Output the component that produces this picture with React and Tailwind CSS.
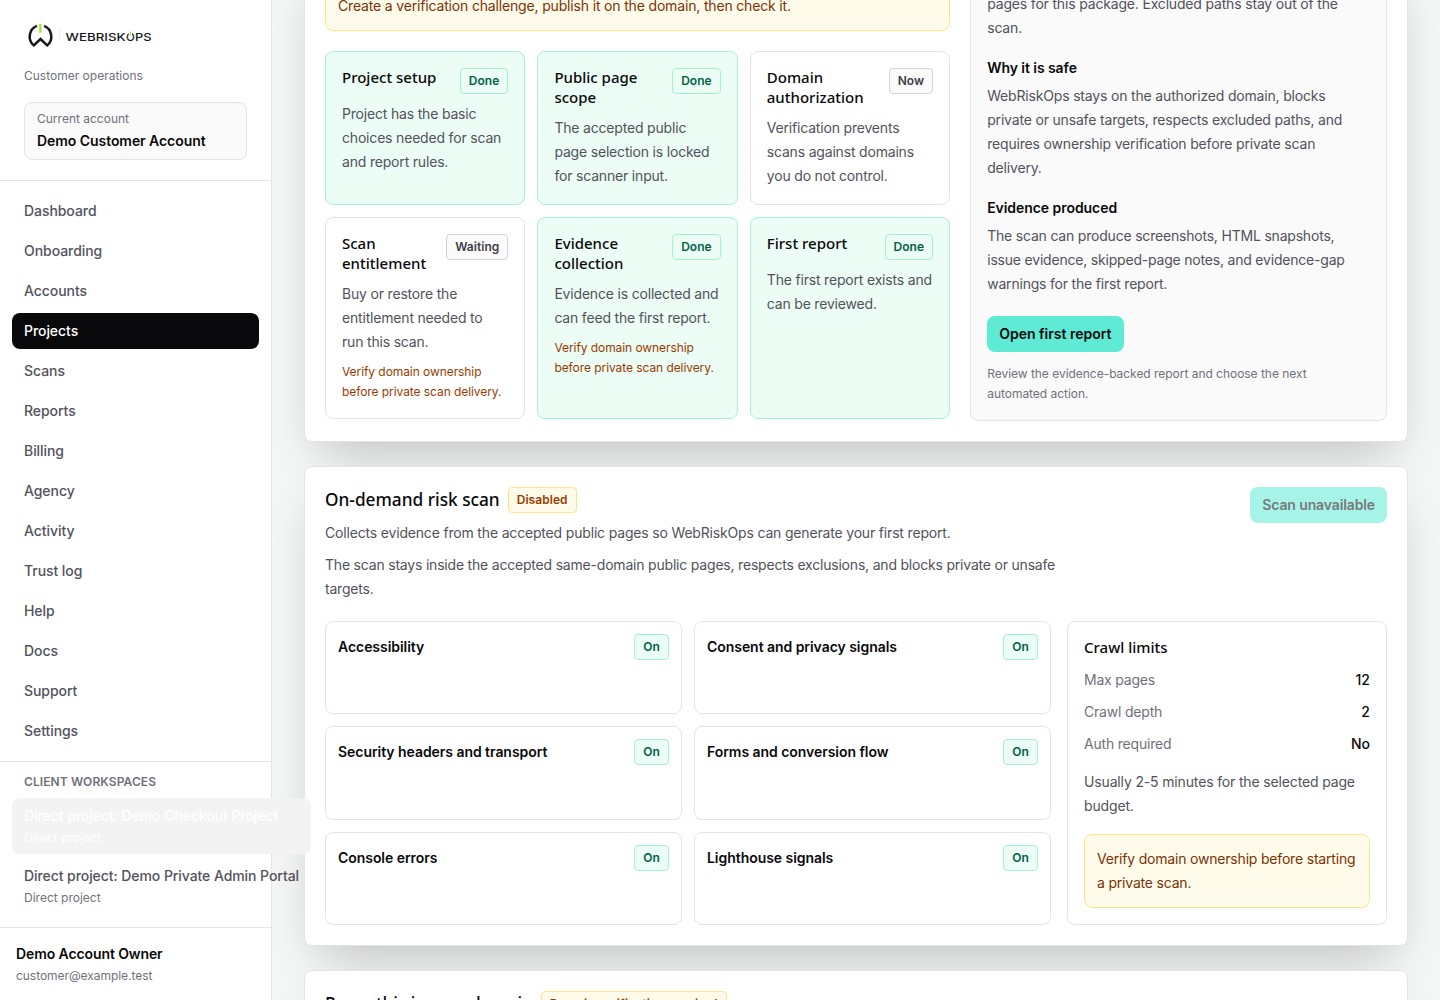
import React from "react";

const navItems = [
  "Dashboard",
  "Onboarding",
  "Accounts",
  "Projects",
  "Scans",
  "Reports",
  "Billing",
  "Agency",
  "Activity",
  "Trust log",
  "Help",
  "Docs",
  "Support",
  "Settings",
];

const setupSteps = [
  { title: "Project setup", status: "Done", text: "Project has the basic choices needed for scan and report rules." },
  { title: "Public page scope", status: "Done", text: "The accepted public page selection is locked for scanner input." },
  { title: "Domain authorization", status: "Now", text: "Verification prevents scans against domains you do not control." },
  {
    title: "Scan entitlement",
    status: "Waiting",
    // keep "run this scan." together on the last line
    text: "Buy or restore the entitlement needed to run\u00a0this\u00a0scan.",
    note: "Verify domain ownership before private scan delivery.",
  },
  {
    title: "Evidence collection",
    status: "Done",
    text: "Evidence is collected and can feed the first report.",
    note: "Verify domain ownership before private scan delivery.",
  },
  { title: "First report", status: "Done", text: "The first report exists and can be reviewed." },
];

const modules = [
  "Accessibility",
  "Consent and privacy signals",
  "Security headers and transport",
  "Forms and conversion flow",
  "Console errors",
  "Lighthouse signals",
];

const limits = [
  { label: "Max pages", value: "12" },
  { label: "Crawl depth", value: "2" },
  { label: "Auth required", value: "No" },
];

const badgeTones = {
  success: "border-emerald-200 bg-emerald-50 text-emerald-800",
  warning: "border-amber-200 bg-amber-50 text-amber-800",
  neutral: "border-zinc-300 bg-zinc-50 text-zinc-700",
};

const Badge = ({ tone = "neutral", className = "tracking-[0.05px]", children }) => (
  <span className={`shrink-0 whitespace-nowrap rounded border px-2 py-1 text-xs font-semibold ${className} ${badgeTones[tone]}`}>
    {children}
  </span>
);

const Panel = ({ className = "", children }) => (
  <section className={`rounded-lg border border-zinc-200 bg-white p-5 shadow-[0_24px_48px_-16px_rgba(0,0,0,0.24)] ${className}`}>
    {children}
  </section>
);

const Logo = () => (
  <svg width="130" height="28" viewBox="0 0 130 28" className="block" aria-label="WebRiskOps">
    {/* Mark: open ring that folds into a W, green power stem */}
    <path
      d="M12.9 3.8A11.6 11.6 0 0 0 9.8 23.4L16.5 17L23.2 23.4A11.6 11.6 0 0 0 20.1 3.8"
      fill="none"
      stroke="#18181b"
      strokeWidth="2.5"
    />
    <path d="M16.4 1.8v9" stroke="#a3e635" strokeWidth="2.4" />
    <path d="M35.5 8v9" stroke="#e4e4e7" strokeWidth="0.7" />
    <g fontFamily="Inter" fontWeight="500" fontSize="10.8" fill="#18181b">
      <text x="41.6" y="18.6" textLength="60" lengthAdjust="spacingAndGlyphs">WEBRISK</text>
      <text x="102" y="18.6" textLength="8.8" lengthAdjust="spacingAndGlyphs">O</text>
      <text x="110.9" y="18.6" textLength="16.6" lengthAdjust="spacingAndGlyphs">PS</text>
    </g>
    <path d="M104.8 9h3.2v4h-3.2z" fill="#fff" />
    <path d="M106.4 9.4v4.4" stroke="#a3e635" strokeWidth="1.1" />
  </svg>
);

const Sidebar = () => (
  <aside className="relative z-10 flex h-full w-[272px] shrink-0 flex-col border-r border-zinc-200 bg-white">
    <div className="h-[181px] shrink-0 border-b border-zinc-200 px-6 pt-[22px]">
      <Logo />
      <p className="mt-[18px] text-xs text-zinc-500">Customer operations</p>
      <div className="mt-[18px] rounded-lg border border-zinc-200 bg-zinc-50 px-3 py-2">
        <p className="text-xs text-zinc-500">Current account</p>
        <p className="mt-1 text-sm font-semibold tracking-[-0.06px] text-zinc-950">Demo Customer Account</p>
      </div>
    </div>

    <nav className="flex flex-col gap-1 p-3">
      {navItems.map((item) => (
        <a
          key={item}
          className={`rounded-lg px-3 py-2 text-sm font-medium tracking-[-0.06px] ${item === "Projects" ? "bg-zinc-950 text-white" : "text-zinc-600"}`}
        >
          {item}
        </a>
      ))}
    </nav>

    {/* Workspace rows keep their full label width and may run past the sidebar */}
    <div className="border-t border-zinc-200 px-3 pt-3">
      <p className="px-3 text-xs font-semibold uppercase tracking-[0.1px] text-zinc-500">Client workspaces</p>
      <div className="mt-2 grid w-max gap-1">
        <a className="whitespace-nowrap rounded-lg bg-[#f3f3f3] px-3 py-2 text-sm font-medium tracking-[-0.06px] text-white">
          Direct project: Demo Checkout Project
          <span className="mt-1 block text-xs font-normal tracking-normal text-white">Direct project</span>
        </a>
        <a className="whitespace-nowrap rounded-lg px-3 py-2 text-sm font-medium tracking-[-0.07px] text-zinc-600">
          Direct project: Demo Private Admin Portal
          <span className="mt-1 block text-xs font-normal tracking-normal text-zinc-500">Direct project</span>
        </a>
      </div>
    </div>

    <div className="mt-[13px] border-t border-zinc-200 p-4">
      <p className="text-sm font-semibold tracking-[-0.1px] text-zinc-950">Demo Account Owner</p>
      <p className="mt-1 text-xs tracking-[-0.04px] text-zinc-500">customer@example.test</p>
    </div>
  </aside>
);

const StepCard = ({ step }) => {
  const done = step.status === "Done";
  return (
    <div className={`rounded-lg border p-4 ${done ? "border-emerald-200 bg-emerald-50" : "border-zinc-200 bg-white"}`}>
      <div className="flex items-start justify-between gap-3">
        <h3 className="-mt-px pb-px font-['Noto_Sans'] text-[15px] font-medium leading-5 text-zinc-950">{step.title}</h3>
        <Badge tone={done ? "success" : "neutral"}>{step.status}</Badge>
      </div>
      <p className="mt-2 text-sm leading-6 tracking-[-0.185px] text-zinc-600">{step.text}</p>
      {step.note && <p className="mt-2 text-xs leading-5 tracking-[-0.07px] text-amber-800">{step.note}</p>}
    </div>
  );
};

const App = () => {
  return (
    <div className="flex h-[1000px] w-[1440px] overflow-hidden bg-[#f5f7f6] font-['Inter',sans-serif] text-zinc-950">
      <Sidebar />

      <main className="flex h-full min-w-0 flex-1 flex-col gap-6 px-8">
        {/* First report setup, scrolled partly out of view */}
        <Panel className="-mt-[46px] shrink-0">
          <div className="grid grid-cols-[minmax(0,1.5fr)_minmax(0,1fr)] gap-5">
            <div className="pt-1.5">
              <div className="rounded-lg border border-amber-200 bg-amber-50 p-3 text-sm leading-6 tracking-[-0.165px] text-amber-900">
                Create a verification challenge, publish it on the domain, then check it.
              </div>
              <div className="mt-5 grid grid-cols-3 gap-3">
                {setupSteps.map((step) => (
                  <StepCard key={step.title} step={step} />
                ))}
              </div>
            </div>

            <div className="rounded-lg border border-zinc-200 bg-zinc-50 p-4 text-sm leading-6 text-zinc-600">
              <p className="tracking-[-0.175px]">pages for this package. Excluded paths stay out of the scan.</p>
              <h4 className="mt-4 font-semibold tracking-[-0.06px] text-zinc-950">Why it is safe</h4>
              <p className="mt-1 tracking-[-0.175px]">
                WebRiskOps stays on the authorized domain, blocks private or unsafe targets, respects excluded paths, and
                requires ownership verification before private scan delivery.
              </p>
              <h4 className="mt-4 font-semibold tracking-[-0.06px] text-zinc-950">Evidence produced</h4>
              <p className="mt-1 tracking-[-0.2px]">
                The scan can produce screenshots, HTML snapshots, issue evidence, skipped-page notes, and evidence-gap
                warnings for the first report.
              </p>
              <button className="mt-5 block rounded-lg bg-[#5eead4] px-3 py-2 text-sm font-semibold text-zinc-950">
                Open first report
              </button>
              <p className="mt-3 max-w-[370px] text-xs leading-5 tracking-[-0.03px] text-zinc-500">
                Review the evidence-backed report and choose the next automated action.
              </p>
            </div>
          </div>
        </Panel>

        {/* On-demand scan */}
        <Panel className="shrink-0">
          <div className="flex items-start justify-between gap-4">
            <div className="max-w-3xl">
              <div className="flex items-center gap-2">
                <h2 className="font-['Noto_Sans'] text-[17.25px] font-medium leading-6">On-demand risk scan</h2>
                <Badge tone="warning">Disabled</Badge>
              </div>
              <p className="mt-2 text-sm leading-6 tracking-[-0.175px] text-zinc-600">
                Collects evidence from the accepted public pages so WebRiskOps can generate your first report.
              </p>
              <p className="mt-2 max-w-[750px] text-sm leading-6 tracking-[-0.2px] text-zinc-600">
                The scan stays inside the accepted same-domain public pages, respects exclusions, and blocks private or
                unsafe targets.
              </p>
            </div>
            <button disabled className="shrink-0 rounded-lg bg-[#5eead4] px-3 py-2 text-sm font-semibold tracking-[-0.12px] opacity-55">
              Scan unavailable
            </button>
          </div>

          <div className="mt-5 grid grid-cols-[minmax(0,1fr)_320px] gap-4">
            <div className="grid grid-cols-2 gap-3">
              {modules.map((name) => (
                <div key={name} className="rounded-lg border border-zinc-200 bg-white p-3">
                  <div className="flex items-center justify-between gap-3">
                    <p className="text-sm font-semibold tracking-[-0.05px]">{name}</p>
                    <Badge tone="success">On</Badge>
                  </div>
                </div>
              ))}
            </div>

            <div className="rounded-lg border border-zinc-200 bg-white p-4 text-sm">
              <h3 className="-mt-px pb-px font-['Noto_Sans'] text-[15px] font-medium leading-5">Crawl limits</h3>
              <dl className="mt-3 flex flex-col gap-3">
                {limits.map((row) => (
                  <div key={row.label} className="flex justify-between">
                    <dt className="tracking-[-0.2px] text-zinc-500">{row.label}</dt>
                    <dd className="font-medium">{row.value}</dd>
                  </div>
                ))}
              </dl>
              <p className="mt-4 leading-6 tracking-[-0.15px] text-zinc-600">Usually 2-5 minutes for the selected page budget.</p>
              <div className="mt-4 rounded-lg border border-amber-200 bg-amber-50 p-3 leading-6 tracking-[-0.19px] text-amber-900">
                Verify domain ownership before starting a private scan.
              </div>
            </div>
          </div>
        </Panel>

        {/* Domain ownership */}
        <Panel className="h-60 shrink-0">
          <div className="flex items-center gap-2">
            <h2 className="font-['Noto_Sans'] text-[17.25px] font-medium leading-6 tracking-[-0.04px]">Prove this is your domain</h2>
            <Badge tone="warning" className="tracking-[0.11px]">Domain verification required</Badge>
          </div>
        </Panel>
      </main>
    </div>
  );
};

export default App;
